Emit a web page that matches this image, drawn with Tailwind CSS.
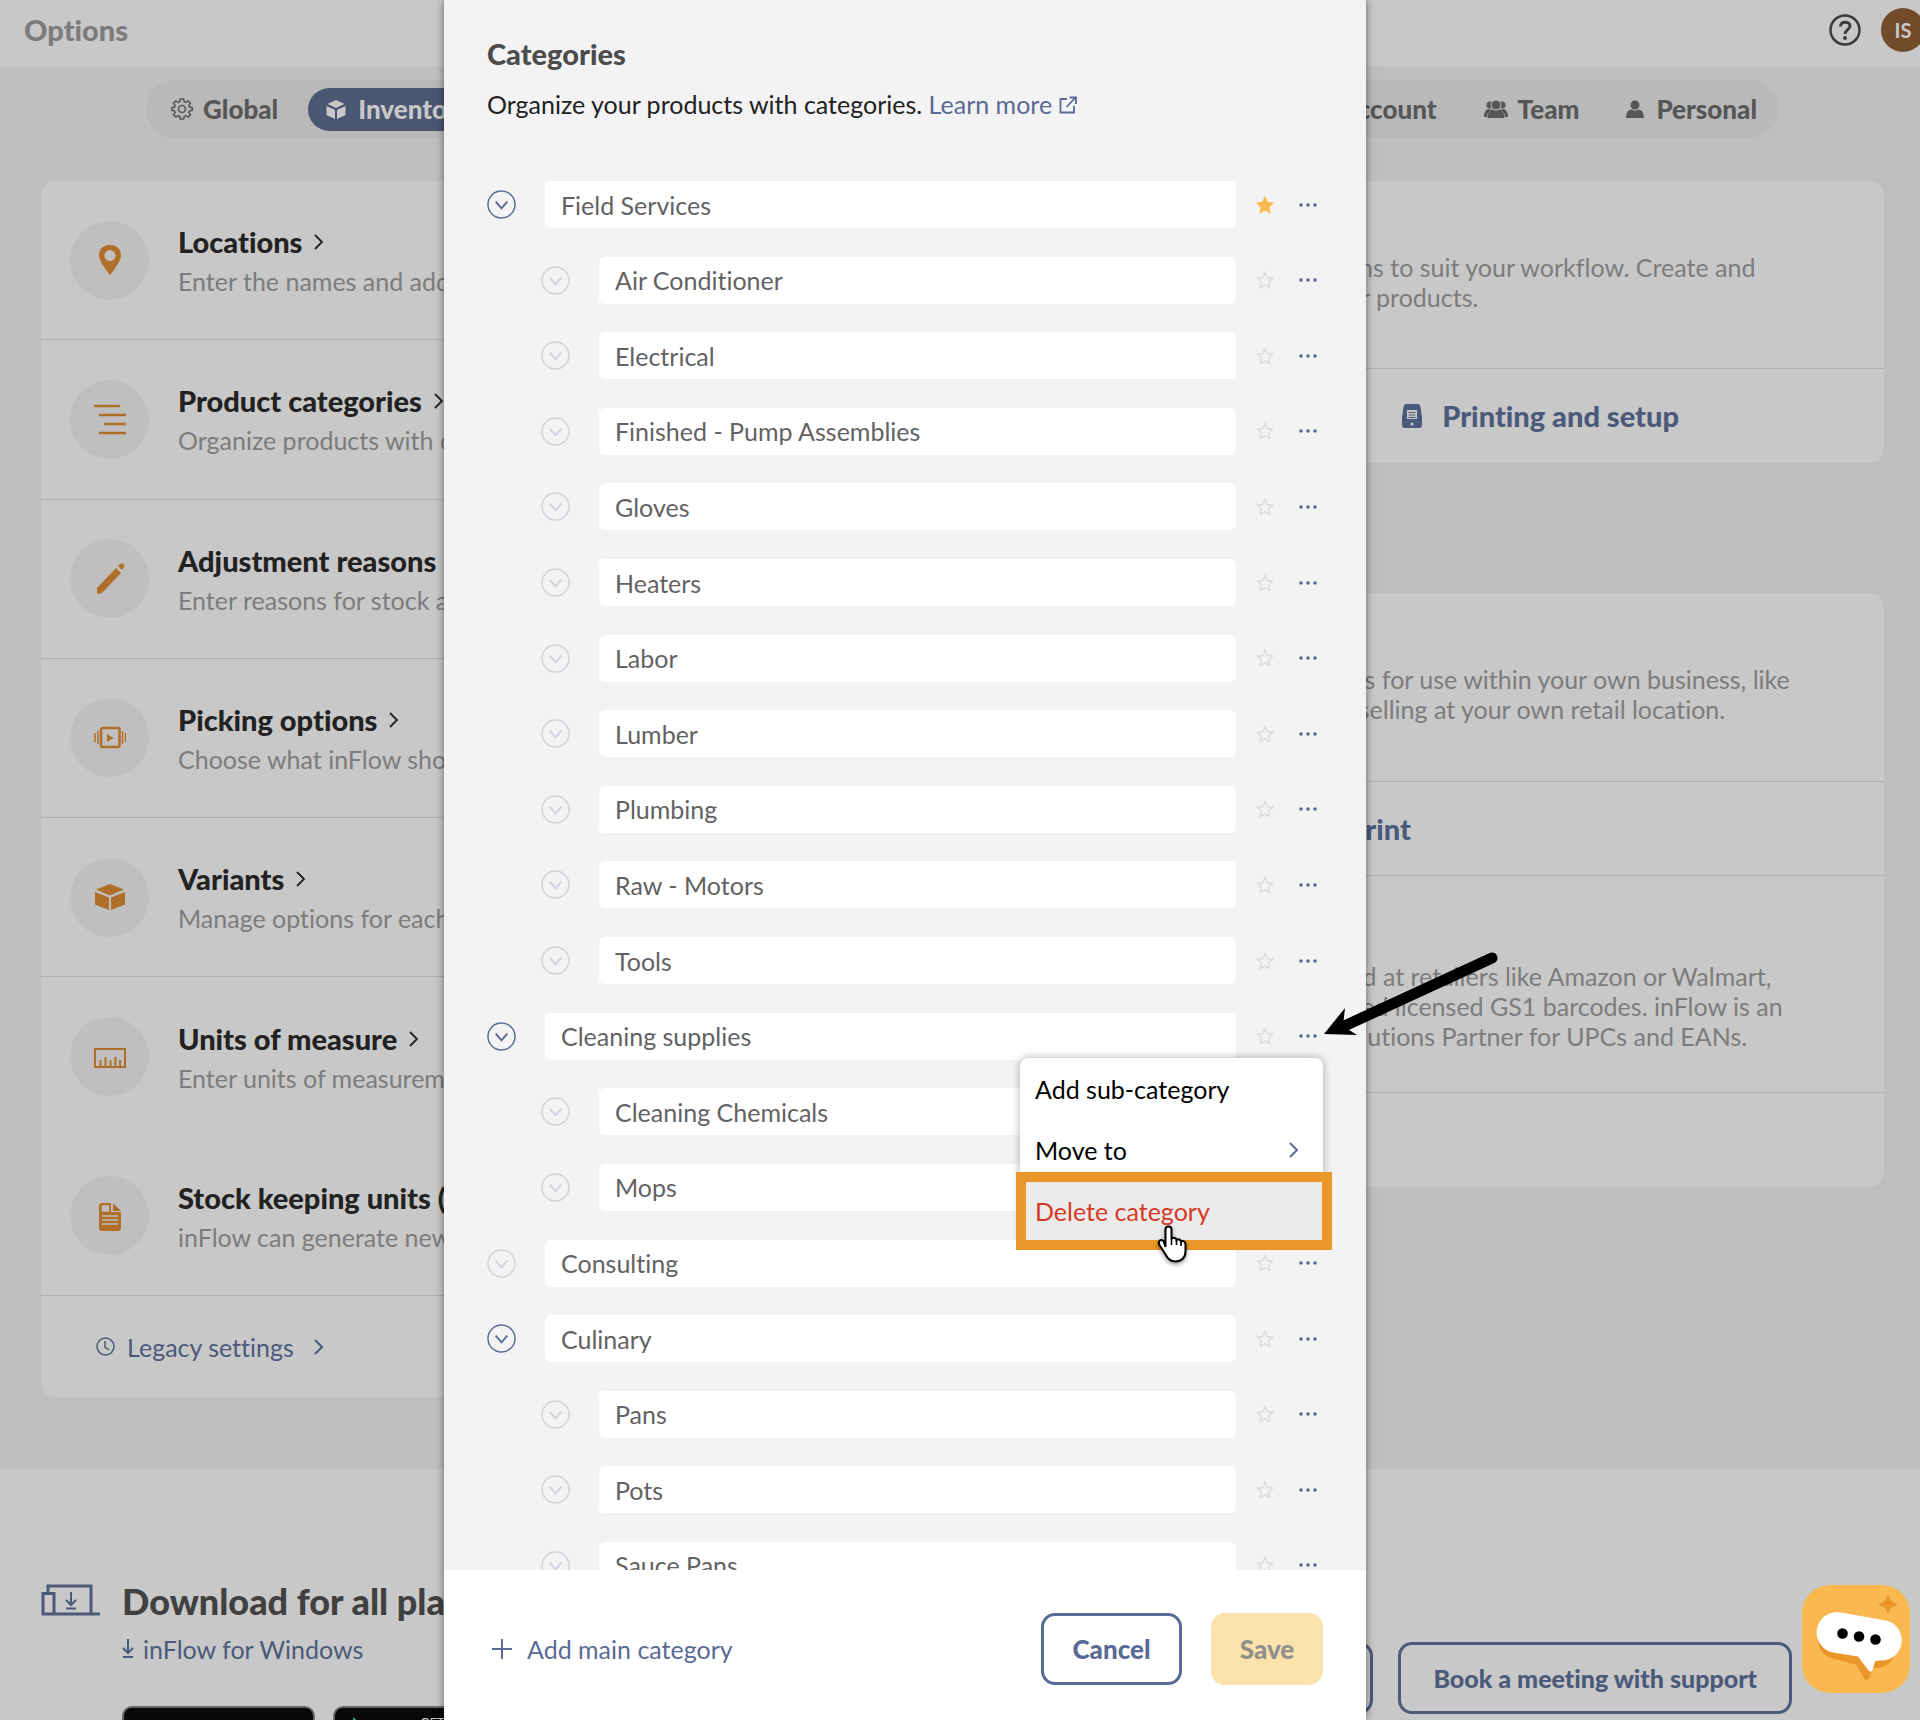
<!DOCTYPE html>
<html lang="en">

<head>
    <meta charset="UTF-8">
    <meta name="viewport" content="width=device-width, initial-scale=1">
    <title>Options</title>
    <script src="https://cdn.jsdelivr.net/npm/@tailwindcss/browser@4"></script>
</head>

<body class="relative min-h-screen overflow-hidden bg-[#c8c8c8] font-['Lato',sans-serif] text-[25px] leading-[30px] text-[#7c7c7c] [font-variant-ligatures:none]">

    <svg class="hidden">
        <symbol id="down" viewBox="0 0 30 30"><circle cx="15" cy="15" r="14" /><path d="M9 12l6 7 6-7" stroke-width="2" /></symbol>
        <symbol id="right" viewBox="0 0 10 16"><path d="M1 1l7 7-7 7" /></symbol>
        <symbol id="star" viewBox="0 0 18 18"><path d="M9 1.500l2.300 5 5.200.7-3.800 3.800.9 5.400L9 13.800l-4.600 2.600.9-5.400L1.500 7.200l5.200-.7z" /></symbol>
    </svg>

    <!-- Page behind the panel -->
    <header class="flex h-[66px] items-center justify-between pb-[6px] pl-6">
        <h1 class="text-[29px] font-black">Options</h1>
        <div class="-mr-[5px] flex items-center gap-5">
            <button type="button" aria-label="Help" class="text-[#3c3c3c]">
                <svg class="size-8" viewBox="0 0 32 32" fill="none" stroke="currentColor"><circle cx="16" cy="16" r="14.500" stroke-width="2.500" /><path d="M11.500 12.500c0-6 9.500-5.500 9.500-.5 0 3.500-5 4-5 8" stroke-width="3" /><circle cx="16" cy="24" r="1" stroke-width="2" /></svg>
            </button>
            <button type="button" class="size-11 rounded-full bg-[#724b2a] text-[20px] font-bold text-[#c8c8c8]">IS</button>
        </div>
    </header>

    <main class="h-[1403px] bg-[#bfbfbf] pt-[14px] pr-9 pl-[41px]">
        <nav class="mr-[105px] ml-[105px] flex h-[58px] items-center justify-between rounded-full bg-[#b9b9b9] pr-[22px] pl-[25px] text-[26px] font-black text-[#565656]">
            <div class="flex items-center gap-[30px]">
                <a href="#" class="flex items-center gap-[10px]">
                    <svg class="size-[22px]" viewBox="0 0 22 22" fill="none" stroke="currentColor" stroke-width="1.600"><path d="M9.300 1h3.400l.5 2.700 1.600.7 2.300-1.500 2.300 2.300-1.500 2.300.6 1.600 2.800.5v2.800l-2.800.5-.6 1.600 1.500 2.300-2.300 2.300-2.300-1.500-1.600.7-.5 2.700H9.300l-.5-2.700-1.600-.7-2.300 1.500-2.300-2.300 1.500-2.300-.6-1.600L1 12.400V9.600l2.500-.5.6-1.600-1.500-2.300 2.300-2.300 2.300 1.500 1.600-.7z" /><circle cx="11" cy="11" r="3.500" /></svg>
                    Global
                </a>
                <a href="#" class="flex h-[43px] items-center gap-3 rounded-full bg-[#4b5672] px-[18px] text-[#c8c8c8]">
                    <svg class="h-[19px] w-5" viewBox="0 0 20 19" fill="currentColor"><path d="M10 0l8.500 4L10 8 1.500 4zM.5 6L9 10v9L.5 15zM19.500 6L11 10v9l8.500-4z" /></svg>
                    Inventory
                </a>
            </div>
            <div class="flex items-center gap-[47px]">
                <a href="#">Account</a>
                <a href="#" class="flex items-center gap-[10px]">
                    <svg class="h-[18px] w-6" viewBox="0 0 24 18" fill="currentColor"><circle cx="6" cy="5" r="3.500" /><circle cx="18" cy="5" r="3.500" /><path d="M0 17c0-5 2-8 5-8l2 1c-3 2-4 4-4 7zM24 17c0-5-2-8-5-8l-2 1c3 2 4 4 4 7z" /><circle cx="12" cy="5" r="5" stroke="#b9b9b9" /><path d="M3.500 18c0-5 2-8 5-8.500 2 1.500 5 1.500 7 0 3 .5 5 3.500 5 8.500z" /></svg>
                    Team
                </a>
                <a href="#" class="flex items-center gap-3">
                    <svg class="h-[18px] w-[18px]" viewBox="0 0 18 18" fill="currentColor"><circle cx="9" cy="5" r="4.500" /><path d="M0 18c0-5 2-8 5.500-8.500 2 1.500 5 1.500 7 0C16 10 18 13 18 18z" /></svg>
                    Personal
                </a>
            </div>
        </nav>

        <div class="mt-[43px] grid grid-cols-2 items-start gap-[41px]">
            <section class="overflow-hidden rounded-[14px] bg-[#c8c8c8] whitespace-nowrap">
                <ul id="options" class="flex h-[1115px] flex-col"></ul>
                <a href="#" class="flex h-[101px] items-center gap-3 pl-[55px] text-[#4b5a7a]">
                    <svg class="size-[19px]" viewBox="0 0 19 19" fill="none" stroke="currentColor" stroke-width="1.500"><circle cx="9.500" cy="9.500" r="8.500" /><path d="M9 4v6l4 3" /></svg>
                    Legacy settings
                    <svg class="ml-2 h-4 w-[10px]" fill="none" stroke="currentColor" stroke-width="2"><use href="#right" /></svg>
                </a>
            </section>

            <div class="flex flex-col gap-[130px] whitespace-nowrap">
                <section class="rounded-[14px] bg-[#c8c8c8]">
                    <div class="h-[188px] border-b border-[#b0b0b0] pt-[71px] pl-[135px]">
                        <p>Choose barcode options to suit your workflow. Create and<br>use new labels for your products.</p>
                    </div>
                    <div class="flex h-[94px] items-center justify-end pr-[205px] text-[29px] font-black text-[#4b5a7a]">
                        <a href="#" class="flex items-center gap-5">
                            <svg class="h-6 w-5" viewBox="0 0 20 24"><path d="M4 0h12q2 0 2.500 3L20 13v8q0 3-3 3H3q-3 0-3-3v-8L1.500 3Q2 0 4 0z" fill="currentColor" /><path d="M5 6h10v9H5z" fill="#c8c8c8" /><path d="M6.500 8.500h7M6.500 11h7M6.500 13.500h7" stroke="currentColor" /><circle cx="10" cy="20" r="1.500" fill="#c8c8c8" /></svg>
                            Printing and setup
                        </a>
                    </div>
                </section>

                <section class="rounded-[14px] bg-[#c8c8c8]">
                    <div class="h-[189px] border-b border-[#b0b0b0] pt-[71px] pl-[137px]">
                        <p>Make internal barcodes for use within your own business, like<br>tracking any stock, or selling at your own retail location.</p>
                    </div>
                    <div class="flex h-[94px] items-center justify-end border-b border-[#b0b0b0] pr-[473px] text-[29px] font-black text-[#4b5a7a]"><a href="#">Generate and print</a></div>
                    <div class="h-[217px] border-b border-[#b0b0b0] pt-[85px] pl-[137px]">
                        <p>For products being sold at retailers like Amazon or Walmart,<br>and so you will just need licensed GS1 barcodes. inFlow is an<br>the official GS1 US Solutions Partner for UPCs and EANs.</p>
                    </div>
                    <div class="h-[94px]"></div>
                </section>
            </div>
        </div>
    </main>

    <footer class="flex h-[251px] justify-between overflow-hidden pr-32 pl-[41px]">
        <div class="flex gap-[21px] pt-[111px] whitespace-nowrap">
            <svg class="mt-1 h-8 w-[60px] text-[#4b5a7a]" viewBox="0 0 60 32" fill="none" stroke="currentColor" stroke-width="3"><path d="M7 9V2h43v28M2 9.500h11V30H2zM2 30h57" /><path d="M30 8v13M25 16l5 5 5-5M25 24.500h10" stroke-width="2" /></svg>
            <div>
                <h2 class="text-[36px] leading-[42px] font-black text-[#404040]">Download for all platforms</h2>
                <a href="#" class="mt-3 flex items-center gap-[9px] text-[#4b5a7a]">
                    <svg class="h-5 w-3" viewBox="0 0 12 20" fill="none" stroke="currentColor" stroke-width="2"><path d="M6 0v14M1 9l5 5 5-5M1 18h10" /></svg>
                    inFlow for Windows
                </a>
                <div class="mt-[42px] flex gap-[18px]">
                    <a href="#" aria-label="App Store" class="h-16 w-[193px] rounded-[10px] border-2 border-[#666] bg-[#080808]"></a>
                    <a href="#" class="flex h-16 w-[217px] items-start gap-[45px] rounded-[10px] border-2 border-[#666] bg-[#080808] pt-[7px] pl-4 text-[13px] leading-4 text-[#c8c8c8]">
                        <svg class="h-9 w-6" viewBox="0 0 24 36"><path d="M2 2l20 16H2z" fill="#1fa463" /><path d="M2 34l20-16H2z" fill="#c0392b" /></svg>
                        GET IT ON
                    </a>
                </div>
            </div>
        </div>
        <div class="flex items-start gap-[25px] pt-[173px] font-black text-[#4b5a7a]">
            <button type="button" class="h-[72px] rounded-[14px] border-3 border-[#4b5a7a] px-8">Contact us</button>
            <button type="button" class="h-[72px] rounded-[14px] border-3 border-[#4b5a7a] px-8">Book a meeting with support</button>
        </div>
    </footer>

    <!-- Categories panel -->
    <div role="dialog" aria-labelledby="panel-title" class="absolute inset-y-0 left-[444px] flex w-[922px] flex-col bg-[#f3f3f3] shadow-[0_0_8px_rgba(0,0,0,0.5)]">
        <div class="min-h-0 flex-1 overflow-hidden pt-9 pr-[43px] pl-[43px]">
            <h2 id="panel-title" class="text-[29px] leading-9 font-black text-[#4c4c4c]">Categories</h2>
            <p class="mt-[17px] text-[#222]">Organize your products with categories.
                <a href="#" class="text-[#596b95]">Learn more
                    <svg class="inline size-[18px] align-baseline" viewBox="0 0 18 18" fill="none" stroke="currentColor" stroke-width="1.800"><path d="M8 3H1.500v13.500H15V10M10.500 1.500H17V8M16.500 1.500L7.500 11" /></svg></a>
            </p>
            <ul id="categories" class="mt-[62px] flex h-[1408px] flex-col justify-between"></ul>
        </div>
        <div class="flex h-[150px] items-center justify-between bg-white pt-[7px] pr-[43px] pl-12">
            <button type="button" class="flex items-center gap-[15px] text-[#596b95]">
                <svg class="size-5" viewBox="0 0 20 20" stroke="currentColor" stroke-width="2"><path d="M10 0v20M0 10h20" /></svg>
                Add main category
            </button>
            <div class="flex gap-[29px] text-[26px] font-black">
                <button type="button" class="h-[72px] w-[141px] rounded-[14px] border-3 border-[#596b95] text-[#596b95]">Cancel</button>
                <button type="button" disabled class="h-[72px] w-28 rounded-[14px] bg-[#fce2ac] text-[#8f8f8b]">Save</button>
            </div>
        </div>
    </div>

    <!-- Row menu -->
    <div role="menu" class="absolute top-[1058px] left-[1020px] flex h-[184px] w-[303px] flex-col rounded-lg bg-white text-black shadow-[0_0_10px_rgba(0,0,0,0.3)]">
        <button type="button" role="menuitem" class="h-[61px] pl-[15px] text-left">Add sub-category</button>
        <button type="button" role="menuitem" class="flex h-[61px] items-center justify-between pr-6 pl-[15px]">
            Move to
            <svg class="h-4 w-[10px] text-[#596b95]" fill="none" stroke="currentColor" stroke-width="2"><use href="#right" /></svg>
        </button>
        <button type="button" role="menuitem" class="h-[62px] bg-[#ebebeb] pl-[15px] text-left text-[#d63a25]">Delete category</button>
    </div>
    <div class="pointer-events-none absolute top-[1172px] left-[1016px] h-[78px] w-[316px] border-10 border-[#eb9628]"></div>
    <svg class="absolute top-[1225px] left-[1156px] h-10 w-8 drop-shadow-[0_2px_2px_rgba(0,0,0,0.4)]" viewBox="0 0 32 40"><path d="M9.500 22V4.500c0-4 6-4 6 0V14c1-2 4.500-1.500 5 1 1.500-1.500 4-.5 4.500 1.500 2-1 4.500 0 4.500 3v7c0 6-4 10-10 10-5 0-8-3-10-7l-6-9.500c-2-3.500 1-6.500 4-4z" fill="#fff" stroke="#000" stroke-width="2" /><path d="M15.500 14v6M20.500 15v5M25 17v4" stroke="#000" stroke-width="1.600" /></svg>
    <svg class="absolute top-[948px] left-[1320px] h-[92px] w-[180px]" viewBox="0 0 180 92"><path d="M172 10L20 80" stroke="#000" stroke-width="11" stroke-linecap="round" /><path d="M4 86l21-26-2 18 14 9z" /></svg>

    <!-- Chat launcher -->
    <button type="button" aria-label="Open chat" class="absolute top-[1585px] right-[10px] size-[108px] rounded-[28px] bg-[#fab950]">
        <svg viewBox="0 0 108 108"><path d="M86 9q2 8 10 10.500-8 2-10 10-2-8-10-10 8-2.500 10-10.500z" fill="#eb9628" /><path d="M16 50q-1 20 16 24l22 5.500 8 14q3 3 5 0l4-10.500q20 1 24-20z" fill="#eb9628" /><path d="M39 27.500l42 7.500a20.300 20.300 0 0 1-3 40.500l-5 .5-2.500 9q-1.500 3-4 .5L56 71.500 31 67.500a20.300 20.300 0 0 1 8-40z" fill="#fff" /><circle cx="40.500" cy="48.500" r="5.300" /><circle cx="57" cy="51.500" r="5.300" /><circle cx="73.500" cy="54.500" r="5.300" /></svg>
    </button>

    <script>
        const options = [
            ['Locations', 'Enter the names and addresses of your locations', '<path d="M16 3C9 3 5 7.500 5 13c0 6 7 15 11 20 4-5 11-14 11-20 0-5.500-4-10-11-10zm0 5a5.500 5.500 0 1 1 0 11 5.500 5.500 0 0 1 0-11z" fill-rule="evenodd" />'],
            ['Product categories', 'Organize products with categories', '<path d="M1 5h24M6 14h26M11 23h21M6 32h26" stroke="currentColor" stroke-width="2.500" stroke-linecap="round" />'],
            ['Adjustment reasons', 'Enter reasons for stock adjustments', '<path d="M3 33v-6L22 7l5 5L8 32zM24 5l2-2q3-2 4 1 1 2-2 5z" />'],
            ['Picking options', 'Choose what inFlow shows when picking', '<g fill="none" stroke="currentColor" stroke-width="2.500"><rect x="7" y="8" width="18.500" height="19" rx="1.500" /><path d="M4 11v13M28.500 11v13" stroke-width="1.500" /><path d="M1 13v9M31.500 13v9" stroke-width="1.500" /></g><path d="M13 14v8l6.500-4z" />'],
            ['Variants', 'Manage options for each product', '<g transform="translate(0 5)"><path d="M16 0l14 5.500L16 11.500 2 5.500zM1 8l14 5.500V26L1 20.500zM31 8l-14 5.500V26l14-5.500z" /></g>'],
            ['Units of measure', 'Enter units of measurement', '<path d="M1 10h30v18H1zM6.500 27v-6M11.500 27v-9M16.500 27v-6M21.500 27v-9M26 27v-6" fill="none" stroke="currentColor" stroke-width="2" />'],
            ['Stock keeping units (SKUs)', 'inFlow can generate new SKUs', '<path d="M8 5h9v9h10v16q0 3-3 3H8q-3 0-3-3V8q0-3 3-3zM19 5l8 8h-8z" /><path d="M8.500 8h6v5h-6zM8 18h16M8 22h16M8 26h16" fill="#bfbfbf" stroke="#bfbfbf" stroke-width="1.500" />'],
        ];

        // The units row runs into the next one without a rule
        document.querySelector('#options').innerHTML = options.map(([title, text, icon]) => `
            <li class="flex flex-1 items-center gap-[29px] border-b ${title === 'Units of measure' ? 'border-transparent' : 'border-[#b0b0b0]'} pl-[29px]">
                <span class="flex size-[79px] items-center justify-center rounded-full bg-[#bfbfbf] text-[#b06f28]">
                    <svg class="h-9 w-8" viewBox="0 0 32 36" fill="currentColor">${icon}</svg>
                </span>
                <div>
                    <a href="#" class="flex items-center gap-3 text-[29px] leading-9 font-black text-[#222]">${title}
                        <svg class="h-4 w-[10px]" fill="none" stroke="currentColor" stroke-width="1.800"><use href="#right" /></svg>
                    </a>
                    <p class="mt-[6px]">${text}</p>
                </div>
            </li>
        `).join('');

        // name, is sub-category, has children
        const categories = [
            ['Field Services', false, true],
            ['Air Conditioner', true],
            ['Electrical', true],
            ['Finished - Pump Assemblies', true],
            ['Gloves', true],
            ['Heaters', true],
            ['Labor', true],
            ['Lumber', true],
            ['Plumbing', true],
            ['Raw - Motors', true],
            ['Tools', true],
            ['Cleaning supplies', false, true],
            ['Cleaning Chemicals', true],
            ['Mops', true],
            ['Consulting', false],
            ['Culinary', false, true],
            ['Pans', true],
            ['Pots', true],
            ['Sauce Pans', true],
        ];

        document.querySelector('#categories').innerHTML = categories.map(([name, sub, open], i) => `
            <li class="flex h-[47px] items-center ${sub ? 'pl-[54px]' : ''}">
                <button type="button" aria-label="Toggle ${name}" class="${open ? 'text-[#596b95]' : 'text-[#d0d3dd]'}">
                    <svg class="size-[29px]" fill="none" stroke="currentColor" stroke-width="1.500"><use href="#down" /></svg>
                </button>
                <input type="text" aria-label="Category name" value="${name}" class="ml-[29px] h-[47px] min-w-0 flex-1 rounded-md bg-white px-4 text-[#626262]">
                <button type="button" aria-label="Set ${name} as default" class="ml-5 ${i === 0 ? 'text-[#fab950]' : 'text-[#dcdcdc]'}">
                    <svg class="size-[18px]" fill="${i === 0 ? 'currentColor' : 'none'}" stroke="currentColor" stroke-width="1.500"><use href="#star" /></svg>
                </button>
                <button type="button" aria-label="${name} menu" class="mr-1 ml-6 text-[#596b95]">
                    <svg class="h-5 w-[21px]" viewBox="0 0 21 20" fill="currentColor"><circle cx="3" cy="10" r="1.800" /><circle cx="10" cy="10" r="1.800" /><circle cx="17" cy="10" r="1.800" /></svg>
                </button>
            </li>
        `).join('');
    </script>

</body>

</html>
